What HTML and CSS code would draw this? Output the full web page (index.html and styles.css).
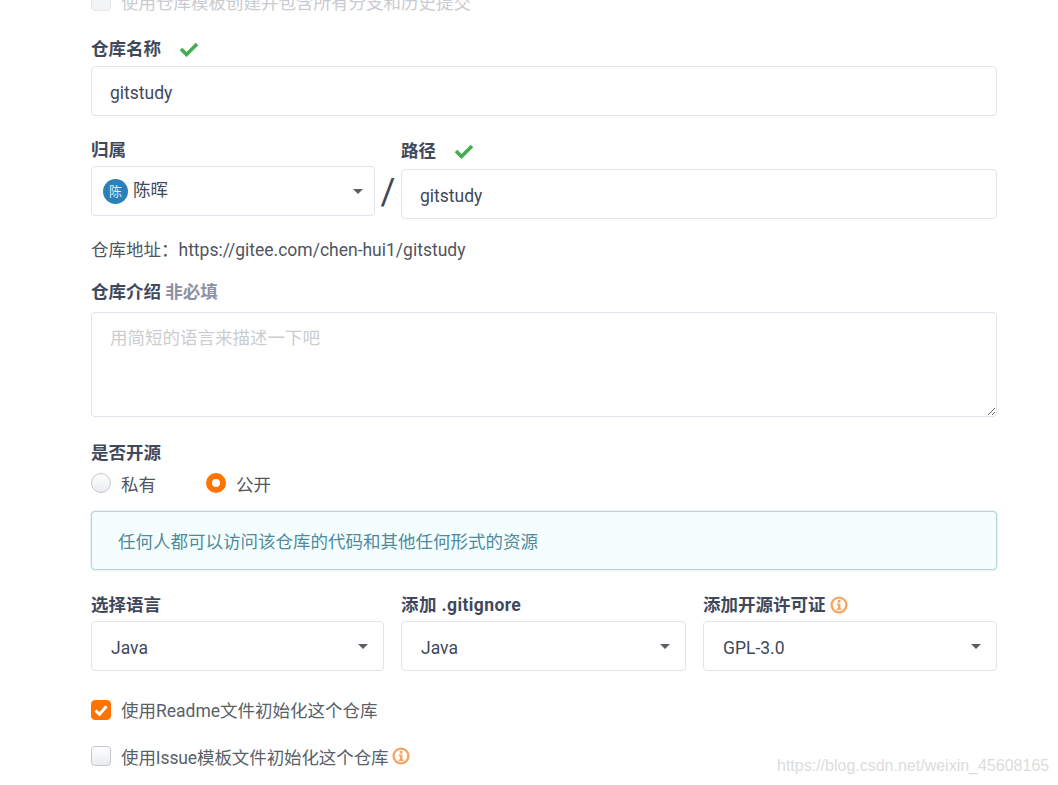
FILE: index.html
```html
<!DOCTYPE html>
<html lang="zh">
<head>
<meta charset="utf-8">
<title>新建仓库</title>
<link rel="stylesheet" href="styles.css">
</head>
<body>
<form class="form">
  <div class="check check-disabled"><span class="box box-faint"></span><span class="faint">使用仓库模板创建并包含所有分支和历史提交</span></div>

  <div class="field-name">
    <div class="label">仓库名称<svg class="ok" viewBox="0 0 20 16"><path d="M2 8l5.5 5.5L18 3" fill="none" stroke="#45ad50" stroke-width="3.6"/></svg></div>
    <input class="input" type="text" value="gitstudy">
  </div>

  <div class="owner-row">
    <div class="owner">
      <div class="label">归属</div>
      <div class="select select-owner"><span class="avatar">陈</span><span class="owner-name">陈晖</span><span class="caret"></span></div>
    </div>
    <div class="slash">/</div>
    <div class="path">
      <div class="label">路径<svg class="ok" viewBox="0 0 20 16"><path d="M2 8l5.5 5.5L18 3" fill="none" stroke="#45ad50" stroke-width="3.6"/></svg></div>
      <input class="input input-path" type="text" value="gitstudy">
    </div>
  </div>

  <div class="address">仓库地址：https://gitee.com/chen-hui1/gitstudy</div>

  <div class="label label-intro">仓库介绍 <span class="optional">非必填</span></div>
  <textarea class="textarea" placeholder="用简短的语言来描述一下吧"></textarea>

  <div class="label label-open">是否开源</div>
  <div class="radios">
    <span class="radio-item"><span class="radio"></span>私有</span>
    <span class="radio-item"><span class="radio radio-on"></span>公开</span>
  </div>
  <div class="message">任何人都可以访问该仓库的代码和其他任何形式的资源</div>

  <div class="select-row">
    <div class="col col-lang">
      <div class="label">选择语言</div>
      <div class="select"><span class="value">Java</span><span class="caret"></span></div>
    </div>
    <div class="col col-ignore">
      <div class="label"><span class="wide">添加 .gitignore</span></div>
      <div class="select"><span class="value">Java</span><span class="caret"></span></div>
    </div>
    <div class="col col-license">
      <div class="label">添加开源许可证<svg class="info" viewBox="0 0 18 18"><circle cx="9" cy="9" r="7.4" fill="none" stroke="#f9a562" stroke-width="2.4"/><rect x="7.800" y="4" width="2.6" height="2.6" fill="#f9a562"/><path d="M6.800 7.600h3.600v4.800H11.600v1.600H6.600v-1.600H8V9.200H6.800z" fill="#f9a562"/></svg></div>
      <div class="select"><span class="value">GPL-3.0</span><span class="caret"></span></div>
    </div>
  </div>

  <div class="check check-readme"><span class="box box-on"><svg viewBox="0 0 20 20"><path d="M4.500 10.500l4 3.800 7-8" fill="none" stroke="#fff" stroke-width="3"/></svg></span><span class="readme-text">使用Readme文件初始化这个仓库</span></div>
  <div class="check check-issue"><span class="box"></span><span class="issue-text">使用Issue模板文件初始化这个仓库</span><svg class="info" viewBox="0 0 18 18"><circle cx="9" cy="9" r="7.4" fill="none" stroke="#f9a562" stroke-width="2.4"/><rect x="7.800" y="4" width="2.6" height="2.6" fill="#f9a562"/><path d="M6.800 7.600h3.600v4.800H11.600v1.600H6.600v-1.600H8V9.200H6.800z" fill="#f9a562"/></svg></div>
</form>
<div class="watermark">https://blog.csdn.net/weixin_45608165</div>
</body>
</html>
```
FILE: styles.css
```css
* { box-sizing: border-box; }
html, body { height: 100%; }
body {
  margin: 0;
  overflow: hidden;
  position: relative;
  background: #fff;
  color: #40485b;
  font-family: Roboto, "Noto Sans CJK SC", sans-serif;
  font-size: 17.5px;
}
.form {
  width: 906px;
  margin: -9px 0 0 91px;
  display: flex;
  flex-direction: column;
}
.label {
  font-weight: 700;
  font-size: 17.5px;
  line-height: 20px;
  color: #40485b;
  display: flex;
  align-items: center;
}
.wide { letter-spacing: 0.4px; }
.input, .textarea, .select {
  display: block;
  width: 100%;
  border: 1px solid #dfe3ec;
  border-radius: 4px;
  background: #fff;
  font-family: inherit;
  font-size: 17.5px;
  color: #40485b;
  outline: none;
}
.input { height: 50px; padding: 4px 18px 0; margin-top: 7px; }
.input-path { margin-top: 8px; }
.ok { width: 20px; height: 16px; margin-left: 18px; }
.info { width: 18px; height: 18px; margin-left: 4px; }

.check { display: flex; align-items: center; height: 20px; color: #5a5f69; }
.box {
  width: 20px; height: 20px; margin-right: 10px;
  border: 1px solid #c4c7ce; border-radius: 4px;
  background: linear-gradient(#fff, #e9ebf0);
  flex: none;
}
.box svg { display: block; width: 20px; height: 20px; margin: -1px; }
.box-on { background: #ff7300; border-color: #ff7300; }
.box-faint { border-color: #e5e6e9; background: #f3f4f6; }
.faint { color: #c9cbd0; }
.check-disabled { margin-bottom: 28px; }
.readme-text { margin-top: -2px; }
.issue-text { letter-spacing: -0.1px; }

.owner-row { display: flex; margin-top: 24px; }
.owner { width: 284px; flex: none; }
.select {
  height: 50px;
  margin-top: 6px;
  padding: 0 19px;
  display: flex;
  align-items: center;
  justify-content: space-between;
}
.value { margin-top: 4px; }
.select-owner { padding-left: 11px; justify-content: flex-start; }
.avatar {
  width: 25px; height: 25px; border-radius: 50%;
  background: #2a81b7; color: #dbe9f2;
  font-size: 13px; line-height: 25px; text-align: center; flex: none;
}
.owner-name { margin-left: 5px; margin-top: -5px; }
.select-owner .caret { margin-left: auto; margin-right: -8px; }
.caret {
  width: 0; height: 0; flex: none; margin-right: -4px;
  border-left: 5.5px solid transparent;
  border-right: 5.5px solid transparent;
  border-top: 5.5px solid #5c5f66;
}
.slash { width: 26px; flex: none; font-size: 36px; line-height: 50px; text-align: center; margin-top: 27px; font-weight: 400; }
.path { flex: 1; padding-top: 1px; }
.address { margin-top: 21px; line-height: 20px; color: #50555f; }
.label-intro { margin-top: 22px; display: block; }
.optional { color: #8c92a4; }
.textarea { height: 105px; margin-top: 10px; padding: 11px 18px; resize: vertical; }
.textarea::placeholder { color: #cccdd0; }
.label-open { margin-top: 26px; }
.radios { display: flex; margin-top: 10px; height: 20px; align-items: center; color: #50555f; }
.radio-item { display: flex; align-items: center; width: 115px; }
.radio {
  width: 20px; height: 20px; border-radius: 50%; margin-right: 10px;
  border: 1px solid #c4c7ce; background: linear-gradient(#fff, #e9ebf0);
}
.radio-on { background: #fff; border: 6px solid #ff7300; }
.message {
  margin-top: 18px;
  height: 59px;
  padding: 0 26px;
  display: flex; align-items: center;
  background: #f5feff;
  border: 1px solid #b5d3dc;
  border-radius: 4px;
  box-shadow: 0 0 2px #b5d3dc;
  color: #4e8a9c;
}
.select-row { display: flex; gap: 17px; margin-top: 25px; }
.col-lang { width: 293px; }
.col-ignore { width: 285px; }
.col-license { width: 294px; }
.check-readme { margin-top: 29px; }
.check-issue { margin-top: 26px; }
.watermark {
  position: absolute; left: 777px; top: 757px;
  font-family: "Liberation Sans", sans-serif;
  font-size: 16px; color: #dcdcdc;
}
```
